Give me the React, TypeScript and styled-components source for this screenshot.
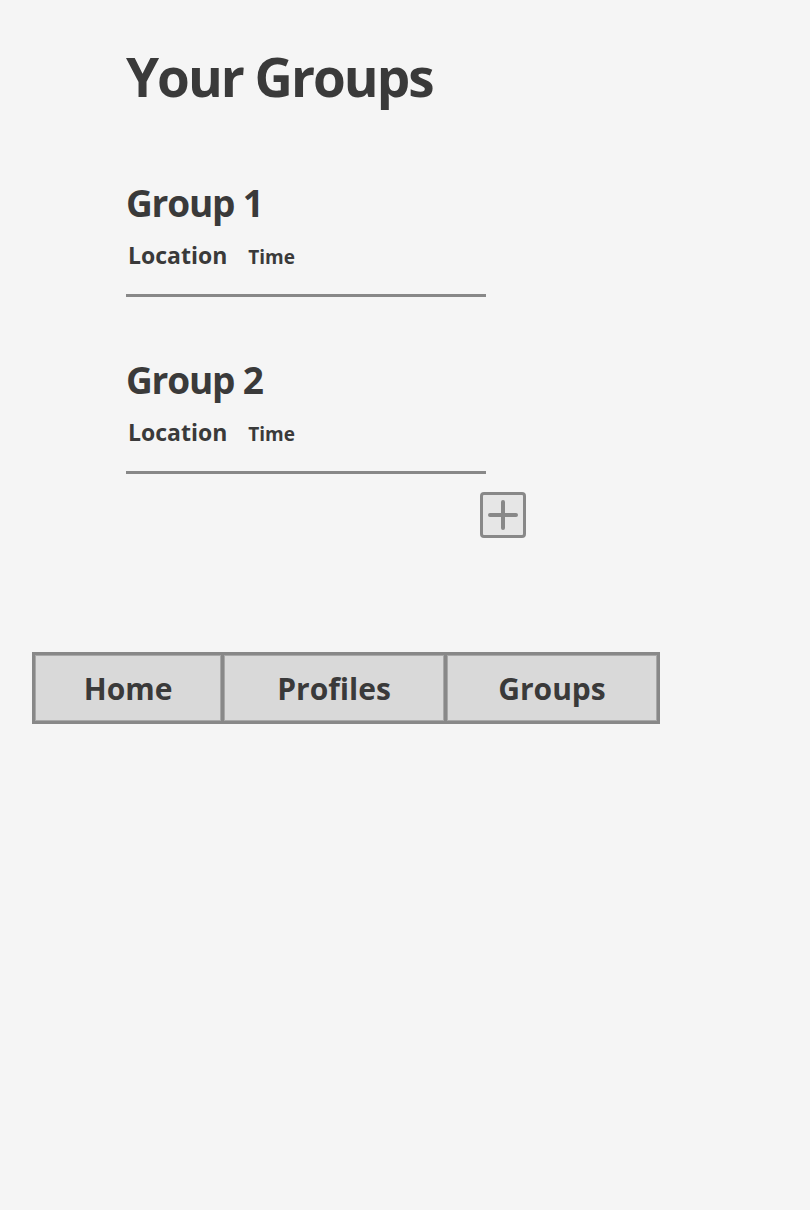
import React from "react";
import styled, { createGlobalStyle } from "styled-components";

const Global = createGlobalStyle`
  html, body {
    margin: 0;
    padding: 0;
    background: #f5f5f5;
  }
  body {
    font-family: "Open Sans", "Liberation Sans", sans-serif;
    color: #3a3a3a;
  }
`;

const Page = styled.div`
  width: 810px;
  min-height: 1210px;
  background: #f5f5f5;
  display: flex;
  flex-direction: column;
`;

const Main = styled.main`
  padding-left: 126px;
  display: flex;
  flex-direction: column;
`;

const Title = styled.h1`
  margin: 47px 0 0;
  font-size: 53px;
  line-height: 60px;
  font-weight: 700;
  letter-spacing: -2px;
`;

const List = styled.div`
  display: flex;
  flex-direction: column;
  margin-top: 74px;
  gap: 61px;
`;

const Card = styled.section`
  width: 360px;
  display: flex;
  flex-direction: column;
  border-bottom: 3px solid #888;
  padding-bottom: 22px;
`;

const CardTitle = styled.h2`
  margin: 0;
  font-size: 37px;
  line-height: 44px;
  font-weight: 700;
  letter-spacing: -1.2px;
`;

const Meta = styled.div`
  display: flex;
  align-items: baseline;
  gap: 21px;
  margin-top: 15px;
  padding-left: 2px;
`;

const Location = styled.span`
  font-size: 23px;
  line-height: 30px;
  font-weight: 700;
`;

const Time = styled.span`
  font-size: 19px;
  line-height: 30px;
  font-weight: 700;
`;

const AddRow = styled.div`
  width: 400px;
  display: flex;
  justify-content: flex-end;
  margin-top: 18px;
`;

const AddButton = styled.button`
  width: 46px;
  height: 46px;
  padding: 0;
  border: 3px solid #888;
  border-radius: 4px;
  background: #e6e6e6;
  display: flex;
  align-items: center;
  justify-content: center;
  cursor: pointer;
`;

const Nav = styled.nav`
  margin: 114px 0 0 32px;
  width: 628px;
  height: 72px;
  box-sizing: border-box;
  border: 3px solid #888;
  display: flex;
  background: #888;
  gap: 3px;
`;

const NavItem = styled.div<{ $w: number }>`
  width: ${(p) => p.$w}px;
  background: #d9d9d9;
  box-shadow: inset 0 0 0 1px #a8a8a8;
  display: flex;
  align-items: center;
  justify-content: center;
  font-size: 30px;
  font-weight: 700;
  color: #3a3a3a;
`;

const groups = [
  { name: "Group 1" },
  { name: "Group 2" },
];

export default function App() {
  return (
    <Page>
      <Global />
      <Main>
        <Title>Your Groups</Title>
        <List>
          {groups.map((g) => (
            <Card key={g.name}>
              <CardTitle>{g.name}</CardTitle>
              <Meta>
                <Location>Location</Location>
                <Time>Time</Time>
              </Meta>
            </Card>
          ))}
        </List>
        <AddRow>
          <AddButton aria-label="Add group">
            <svg width="34" height="34" viewBox="0 0 34 34">
              <path d="M17 4v26M4 17h26" stroke="#888" strokeWidth="4" strokeLinecap="round" />
            </svg>
          </AddButton>
        </AddRow>
      </Main>
      <Nav>
        <NavItem $w={187}>Home</NavItem>
        <NavItem $w={221}>Profiles</NavItem>
        <NavItem $w={211}>Groups</NavItem>
      </Nav>
    </Page>
  );
}
